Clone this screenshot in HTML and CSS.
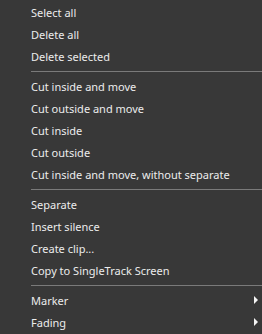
FILE: index.html
```html
<!DOCTYPE html>
<html lang="en">
<head>
    <meta charset="UTF-8">
    <title>Context Menu</title>
    <link rel="stylesheet" href="styles.css">
</head>
<body>
    <div class="menu">
        <div class="menu-item">Select all</div>
        <div class="menu-item">Delete all</div>
        <div class="menu-item">Delete selected</div>
        <div class="separator"></div>
        <div class="menu-item">Cut inside and move</div>
        <div class="menu-item">Cut outside and move</div>
        <div class="menu-item">Cut inside</div>
        <div class="menu-item">Cut outside</div>
        <div class="menu-item">Cut inside and move, without separate</div>
        <div class="separator"></div>
        <div class="menu-item">Separate</div>
        <div class="menu-item">Insert silence</div>
        <div class="menu-item">Create clip...</div>
        <div class="menu-item">Copy to SingleTrack Screen</div>
        <div class="separator"></div>
        <div class="menu-item submenu">Marker<span class="arrow"></span></div>
        <div class="menu-item submenu">Fading<span class="arrow"></span></div>
    </div>
</body>
</html>
```

FILE: styles.css
```css
body {
    margin: 0;
    background-color: #383838;
    font-family: 'Noto Sans', 'Open Sans', sans-serif;
}
.menu {
    padding-top: 1px;
    color: #ececec;
    font-size: 11px;
}
.menu-item {
    height: 22px;
    padding-left: 31px;
    padding-top: 1px;
    box-sizing: border-box;
    display: flex;
    align-items: center;
    white-space: nowrap;
}
.separator {
    height: 1px;
    margin: 4px 0 3px 31px;
    background-color: #7a7a7a;
}
.submenu {
    justify-content: space-between;
    padding-right: 4px;
}
.arrow {
    width: 0;
    height: 0;
    margin-top: -1px;
    border-top: 4px solid transparent;
    border-bottom: 4px solid transparent;
    border-left: 4px solid #f4f4f4;
}
```
